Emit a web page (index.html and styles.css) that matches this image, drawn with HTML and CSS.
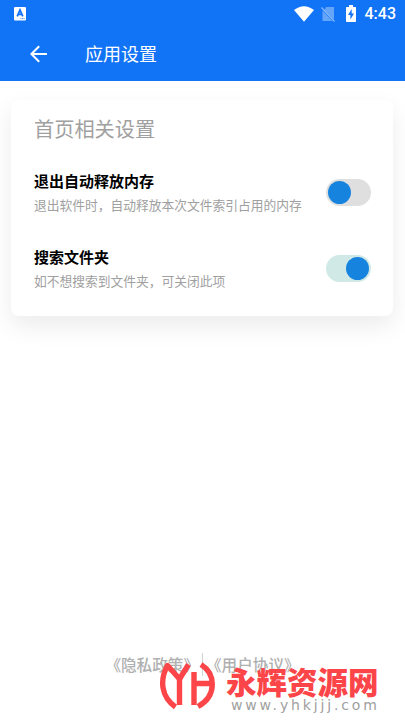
FILE: index.html
```html
<!DOCTYPE html>
<html lang="zh-CN">
<head>
<meta charset="utf-8">
<title>应用设置</title>
<link rel="stylesheet" href="styles.css">
</head>
<body>
<header class="top">
  <div class="status">
    <svg class="keyboard" width="12" height="14" viewBox="0 0 12 14"><rect width="12" height="13.4" rx="1" fill="#fff"/><path d="M3.200 9.300 6 3 8.800 9.300M4.200 7.400h3.600" fill="none" stroke="#1173f6" stroke-width="1.800"/><path d="M6.500 11.600h4.500" stroke="#1173f6" stroke-width=".8" stroke-dasharray="1 .5"/></svg>
    <svg class="wifi" width="20" height="16" viewBox="0 0 20 16"><path d="M0 4Q10-3.600 20 4L10 15.800Z" fill="#fff"/></svg>
    <svg class="sim" width="14" height="16" viewBox="0 0 14 16"><path d="M5 1h8v12.500L3.500 4ZM1.500 4.500 11.500 15H1.500Z" fill="#fff" opacity=".35"/><path d="M.5 1.500 13.500 15.500" stroke="#fff" stroke-width="1.200" opacity=".5"/></svg>
    <svg class="battery" width="10" height="17" viewBox="0 0 10 17"><path d="M3 0h4v2h2.200q.8 0 .8.800v13.400q0 .8-.8.800H.8Q0 17 0 16.200V2.800Q0 2 .8 2H3Z" fill="#fff"/><path d="M5.700 4 2 10h2.400v4.500L8 8.500H5.700Z" fill="#1173f6"/></svg>
    <span class="time">4:43</span>
  </div>
  <div class="bar">
    <svg class="back" width="18" height="18" viewBox="0 0 18 18"><path d="M17 9H2M9.200 1.200 1.400 9l7.800 7.800" fill="none" stroke="#fff" stroke-width="2"/></svg>
    <h1>应用设置</h1>
  </div>
</header>
<main class="card">
  <h2>首页相关设置</h2>
  <section class="row">
    <div><h3>退出自动释放内存</h3><p>退出软件时，自动释放本次文件索引占用的内存</p></div>
    <div class="switch"></div>
  </section>
  <section class="row">
    <div><h3>搜索文件夹</h3><p>如不想搜索到文件夹，可关闭此项</p></div>
    <div class="switch on"></div>
  </section>
</main>
<footer class="links"><span>《隐私政策》</span><i></i><span>《用户协议》</span></footer>
<div class="brand">
  <svg width="56" height="50" viewBox="0 0 56 50"><g fill="none" stroke="#fc4548" stroke-width="5.400" stroke-linejoin="round"><path d="M16.500 47C2 37 .5 20 8.500 5.500L20.500 19 29.500 4.500" /><path d="M20.500 18v27M35 12v33M35 23.500H53"/><path d="M42 4.500C57 14 58 36 39 46.500"/></g></svg>
  <div class="brand-text"><strong>永辉资源网</strong><span>www.yhkjjj.com</span></div>
</div>
</body>
</html>
```

FILE: styles.css
```css
* { box-sizing: border-box; margin: 0; padding: 0; }
body {
  display: flex;
  flex-direction: column;
  height: 720px;
  overflow: hidden;
  background: #fff;
  font-family: "Noto Sans CJK SC", sans-serif;
}
svg { display: block; flex: none; }
.top { height: 81px; background: #1173f6; color: #fff; }
.status { display: flex; align-items: center; height: 27px; padding: 0 9px 0 14px; }
.wifi { margin-left: auto; }
.sim { margin-left: 7px; }
.battery { margin-left: 11px; }
.time { margin-left: 9px; font: 500 16px/28px Roboto, sans-serif; }
.bar { display: flex; align-items: center; height: 54px; padding-left: 30px; }
.bar h1 { margin: -1px 0 0 37px; font-size: 18px; font-weight: 400; line-height: 27px; }
.card {
  height: 215.500px;
  margin: 19px 12px 0 11px;
  padding: 14px 22px 0 23px;
  border-radius: 8px;
  box-shadow: 0 10px 24px rgba(0, 0, 0, .08);
}
.card h2 { height: 30px; color: #a0a0a0; font-size: 20.200px; font-weight: 400; line-height: 30px; }
.row { display: flex; align-items: center; justify-content: space-between; height: 76.500px; margin-top: 10px; }
.row + .row { margin-top: 0; }
.row h3 { font-size: 15px; font-weight: 700; line-height: 24px; color: #000; }
.row p { font-size: 12.750px; line-height: 23px; color: #a0a0a0; white-space: nowrap; }
.switch { display: flex; align-items: center; width: 45px; height: 27px; padding: 0 3px 0 2px; border-radius: 14px; background: #dfdfdf; }
.switch::before { content: ""; width: 23px; height: 23px; border-radius: 50%; background: #1684df; }
.switch.on { justify-content: flex-end; padding-right: 2px; background: #d1e9e6; }
.links { display: flex; align-items: center; justify-content: center; gap: 3px; height: 24px; margin-top: auto; margin-bottom: 44px; color: #b0b0b0; font-size: 15.600px; font-weight: 500; }
.links i { width: 1px; height: 23px; background: #d0d0d0; }
.brand { position: absolute; left: 159px; top: 660px; display: flex; }
.brand-text { margin-left: 11px; }
.brand strong { display: block; color: #fc4548; font-size: 30.500px; font-weight: 900; line-height: 42px; white-space: nowrap; }
.brand span { display: block; margin: -6px 0 0 5px; color: #a0a0a0; font: 14px/18px "DejaVu Sans", sans-serif; letter-spacing: 2.850px; white-space: nowrap; }
```
